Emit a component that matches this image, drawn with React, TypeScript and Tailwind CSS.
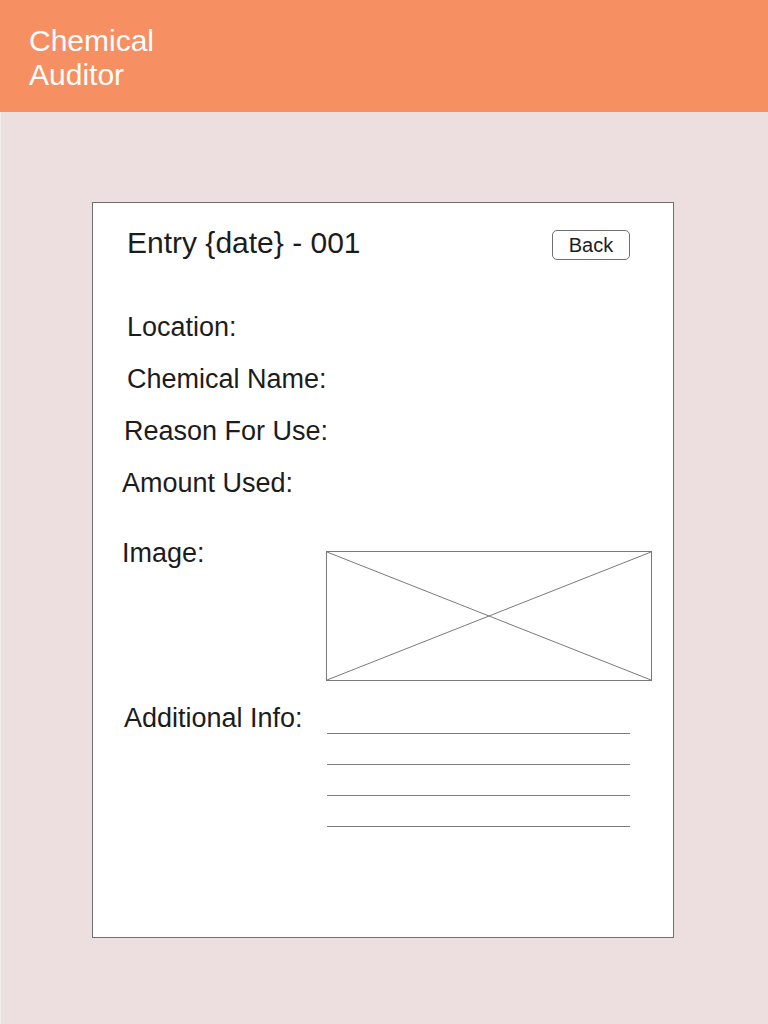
export default function App() {
  return (
    <div className="flex min-h-[1024px] w-[768px] flex-col bg-[#eddfdf] font-['Liberation_Sans',Arial,sans-serif] text-[#1c1c1c]">
      <header className="h-[112px] shrink-0 bg-[#f68f61] pl-[29px] pt-[24px] text-[30px] leading-[34px] text-white">
        Chemical
        <br />
        Auditor
      </header>

      <div className="flex-1 border-l border-[#f4eded] pt-[90px]">
        <div className="ml-[91px] h-[736px] w-[582px] border border-[#6f6f6f] bg-white pl-[29px] pr-[43px] pt-[23px]">
          <div className="flex items-start justify-between">
            <h1 className="ml-[5px] text-[30px] font-normal leading-[34px]">Entry {"{date}"} - 001</h1>
            <button className="mt-[4px] h-[30px] w-[78px] rounded-[5px] border border-[#6f6f6f] text-[20px] leading-[28px]">
              Back
            </button>
          </div>

          <div className="mt-[51px] text-[27px] leading-[32px]">
            <div className="ml-[5px] h-[52px]">Location:</div>
            <div className="ml-[5px] h-[52px]">Chemical Name:</div>
            <div className="ml-[2px] h-[52px]">Reason For Use:</div>
            <div className="h-[52px]">Amount Used:</div>

            <div className="mt-[18px] flex items-start">
              <div className="w-[204px] shrink-0">Image:</div>
              <div className="mt-[14px] h-[130px] w-[326px] shrink-0 border border-[#7a7a7a]">
                <svg className="h-full w-full" viewBox="0 0 324 128" preserveAspectRatio="none">
                  <line x1="0" y1="0" x2="324" y2="128" stroke="#7a7a7a" strokeWidth="1" />
                  <line x1="0" y1="128" x2="324" y2="0" stroke="#7a7a7a" strokeWidth="1" />
                </svg>
              </div>
            </div>

            <div className="mt-[21px] flex items-start">
              <div className="w-[205px] shrink-0">
                <span className="ml-[2px] block">Additional Info:</span>
              </div>
              <div className="mt-[31px] flex w-[303px] shrink-0 flex-col gap-[30px]">
                <div className="h-px bg-[#7d7d7d]" />
                <div className="h-px bg-[#7d7d7d]" />
                <div className="h-px bg-[#7d7d7d]" />
                <div className="h-px bg-[#7d7d7d]" />
              </div>
            </div>
          </div>
        </div>
      </div>
    </div>
  );
}
